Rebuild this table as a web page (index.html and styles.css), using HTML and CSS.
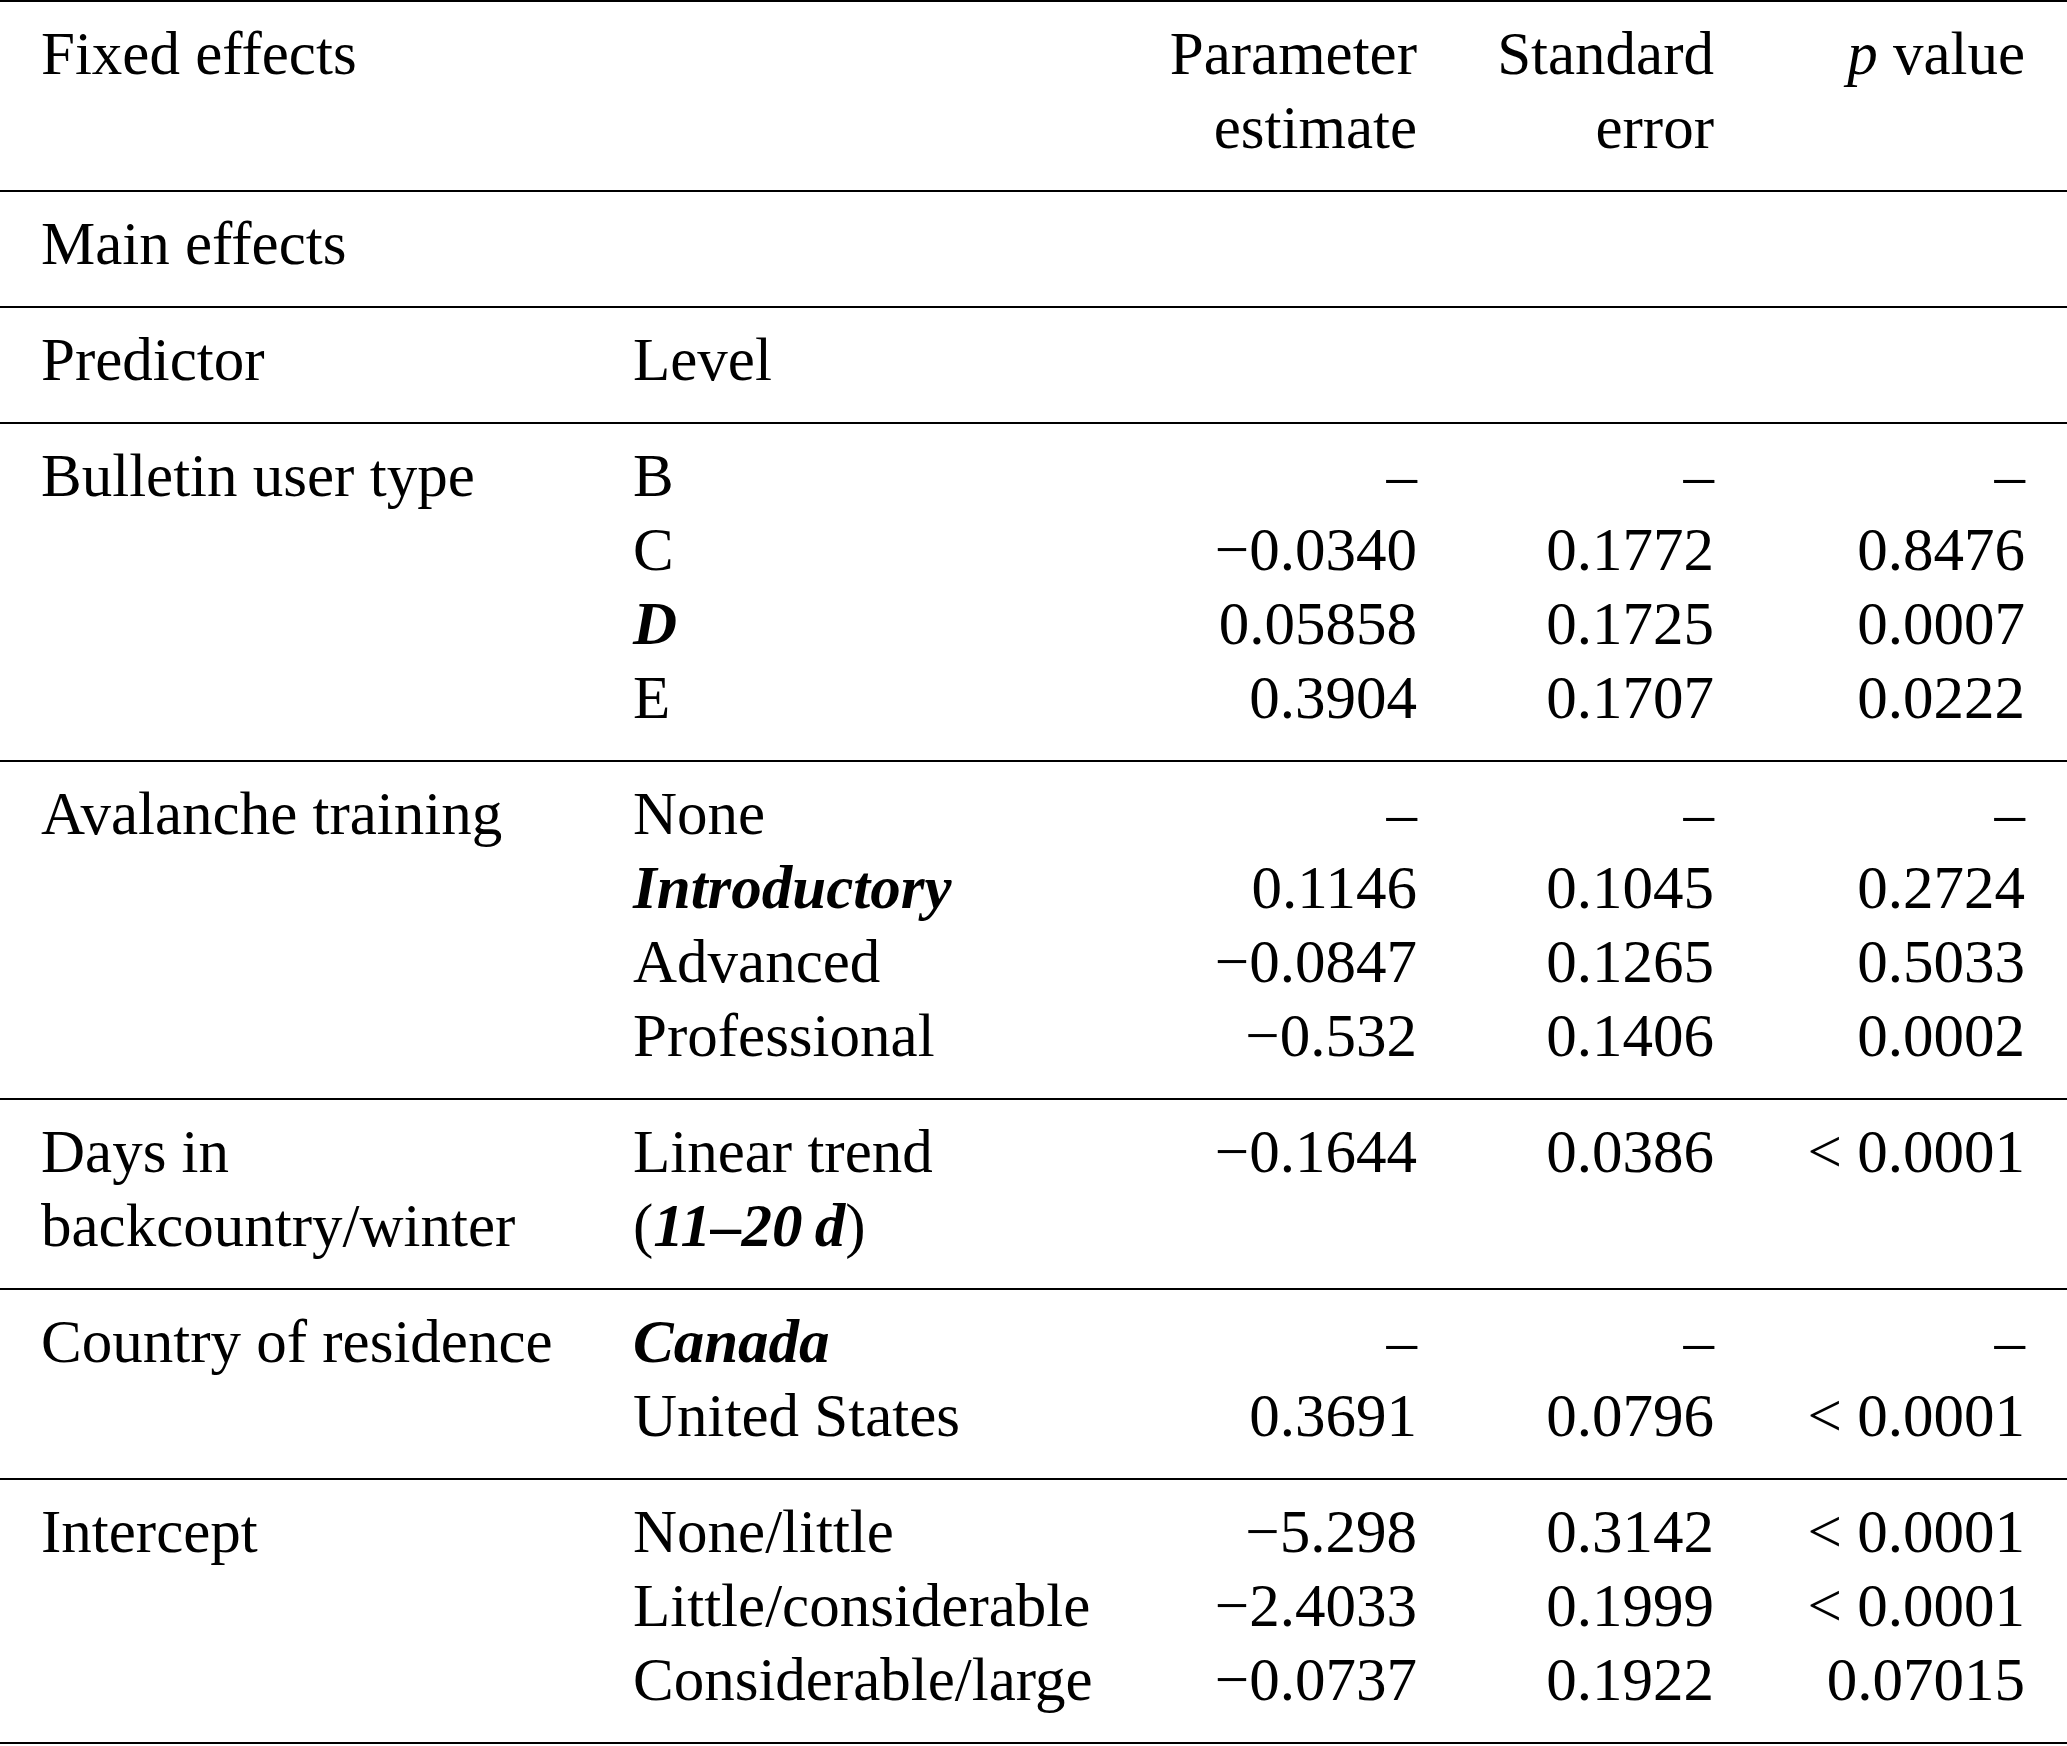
FILE: index.html
```html
<!DOCTYPE html>
<html lang="en">
<head>
<meta charset="utf-8">
<title>Fixed effects</title>
<link rel="stylesheet" href="styles.css">
</head>
<body>
<div class="tbl">
  <div class="sec first">
    <div class="c1">Fixed effects</div>
    <div class="c2"></div>
    <div class="num">Parameter<br>estimate</div>
    <div class="num">Standard<br>error</div>
    <div class="num"><i>p</i> value</div>
  </div>
  <div class="sec">
    <div class="c1">Main effects</div>
  </div>
  <div class="sec">
    <div class="c1">Predictor</div>
    <div class="c2">Level</div>
  </div>
  <div class="sec">
    <div class="c1">Bulletin user type</div><div class="c2">B</div><div class="num">–</div><div class="num">–</div><div class="num">–</div>
    <div class="c1"></div><div class="c2">C</div><div class="num">−0.0340</div><div class="num">0.1772</div><div class="num">0.8476</div>
    <div class="c1"></div><div class="c2"><b class="bi">D</b></div><div class="num">0.05858</div><div class="num">0.1725</div><div class="num">0.0007</div>
    <div class="c1"></div><div class="c2">E</div><div class="num">0.3904</div><div class="num">0.1707</div><div class="num">0.0222</div>
  </div>
  <div class="sec">
    <div class="c1">Avalanche training</div><div class="c2">None</div><div class="num">–</div><div class="num">–</div><div class="num">–</div>
    <div class="c1"></div><div class="c2"><b class="bi">Introductory</b></div><div class="num">0.1146</div><div class="num">0.1045</div><div class="num">0.2724</div>
    <div class="c1"></div><div class="c2">Advanced</div><div class="num">−0.0847</div><div class="num">0.1265</div><div class="num">0.5033</div>
    <div class="c1"></div><div class="c2">Professional</div><div class="num">−0.532</div><div class="num">0.1406</div><div class="num">0.0002</div>
  </div>
  <div class="sec">
    <div class="c1">Days in<br>backcountry/winter</div><div class="c2">Linear trend<br>(<b class="bi">11–20&#8201;d</b>)</div><div class="num">−0.1644</div><div class="num">0.0386</div><div class="num">&lt; 0.0001</div>
  </div>
  <div class="sec">
    <div class="c1">Country of residence</div><div class="c2"><b class="bi">Canada</b></div><div class="num">–</div><div class="num">–</div><div class="num">–</div>
    <div class="c1"></div><div class="c2">United States</div><div class="num">0.3691</div><div class="num">0.0796</div><div class="num">&lt; 0.0001</div>
  </div>
  <div class="sec">
    <div class="c1">Intercept</div><div class="c2">None/little</div><div class="num">−5.298</div><div class="num">0.3142</div><div class="num">&lt; 0.0001</div>
    <div class="c1"></div><div class="c2">Little/considerable</div><div class="num">−2.4033</div><div class="num">0.1999</div><div class="num">&lt; 0.0001</div>
    <div class="c1"></div><div class="c2">Considerable/large</div><div class="num">−0.0737</div><div class="num">0.1922</div><div class="num">0.07015</div>
  </div>
</div>
</body>
</html>
```
FILE: styles.css
```css
html, body {
  margin: 0;
  padding: 0;
  background: #fff;
}
body {
  font-family: "Liberation Serif", "Times New Roman", serif;
  font-size: 61px;
  line-height: 74px;
  color: #000;
}
.tbl {
  width: 2067px;
}
.sec {
  display: grid;
  grid-template-columns: 592px 460px 324px 297px 311px;
  padding: 15px 42px 25px 41px;
  border-bottom: 2px solid #000;
}
.sec.first {
  border-top: 2px solid #000;
}
.c1, .c2 {
  text-align: left;
  white-space: nowrap;
}
.num {
  text-align: right;
  white-space: nowrap;
}
.bi {
  font-weight: bold;
  font-style: italic;
}
```
